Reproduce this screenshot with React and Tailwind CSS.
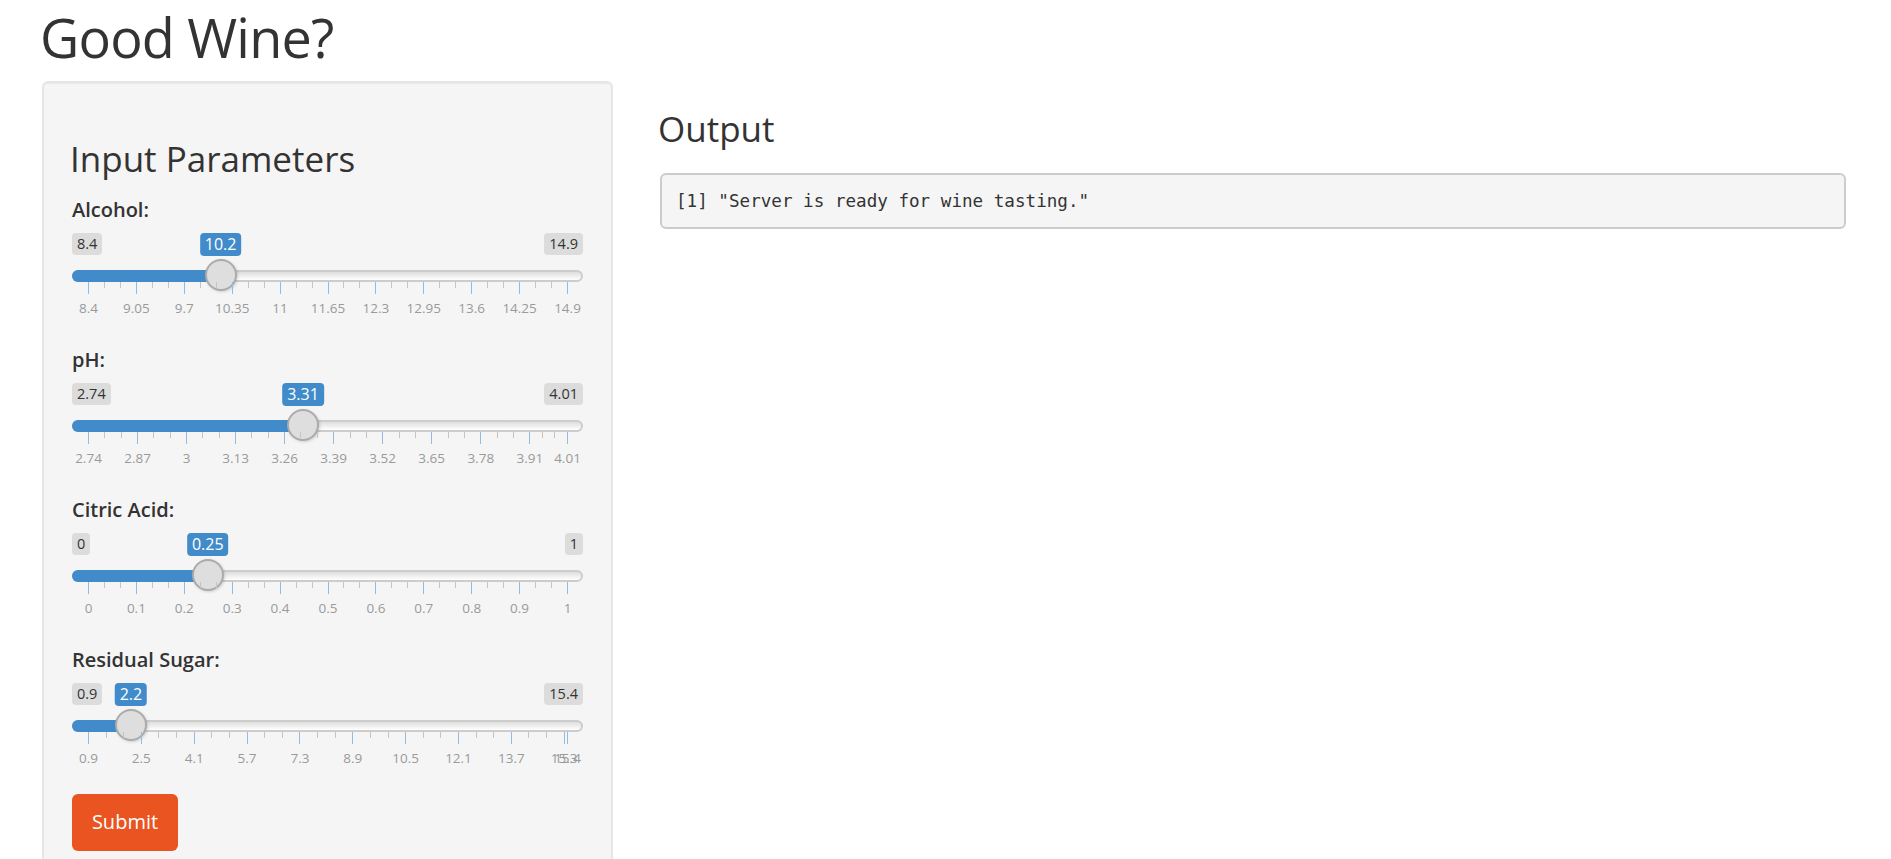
import React from 'react';

const sliders = [
  { id: 'alcohol', label: 'Alcohol:', min: 8.4, max: 14.9, value: 10.2, step: 0.65 },
  { id: 'ph', label: 'pH:', min: 2.74, max: 4.01, value: 3.31, step: 0.13 },
  { id: 'citric', label: 'Citric Acid:', min: 0, max: 1, value: 0.25, step: 0.1 },
  { id: 'sugar', label: 'Residual Sugar:', min: 0.9, max: 15.4, value: 2.2, step: 1.6 },
];

// track fills the well's content width; the handle travels inside it
const TRACK_W = 511;
const HANDLE = 32;
const GRID_W = TRACK_W - HANDLE;

const fmt = (v) => String(parseFloat(v.toFixed(2)));

const RangeSlider = ({ min, max, value, step }) => {
  const pos = (v) => HANDLE / 2 + Math.min(1, (v - min) / (max - min)) * GRID_W;

  const majors = [];
  for (let i = 0; i < 50; i++) {
    const v = min + step * i;
    if (v > max + 1e-9) {
      majors.push(max);
      break;
    }
    majors.push(v);
    if (Math.abs(v - max) < 1e-9) break;
  }

  const smalls = [];
  majors.forEach((v, i) => {
    if (i === 0) return;
    const a = pos(majors[i - 1]);
    const b = pos(v);
    if (b - a > 8) smalls.push(a + (b - a) / 3, a + (2 * (b - a)) / 3);
  });

  const handleX = pos(value);

  return (
    <div className="flex flex-col">
      {/* min / current / max badges */}
      <div className="relative flex h-[25px] items-start justify-between">
        <span className="rounded-[4px] bg-[#dcdcdc] px-[5px] text-[14.5px] leading-[22px] text-[#333]">{fmt(min)}</span>
        <span className="rounded-[4px] bg-[#dcdcdc] px-[5px] text-[14.5px] leading-[22px] text-[#333]">{fmt(max)}</span>
        <span
          className="absolute top-0 -translate-x-1/2 whitespace-nowrap rounded-[4px] bg-[#428bca] px-[5px] text-[16px] leading-[23.5px] text-white"
          style={{ left: handleX }}
        >
          {fmt(value)}
        </span>
      </div>

      {/* track */}
      <div className="relative mt-[12px] h-[12px]">
        <div className="h-full w-full rounded-full border-2 border-[#cccccc] bg-linear-to-b from-[#dedede] to-white" />
        <div className="absolute inset-y-0 left-0 rounded-l-full bg-[#428bca]" style={{ width: handleX }} />
        <div
          className="absolute -top-[11px] h-[32px] w-[32px] rounded-full border-2 border-[#ababab] bg-[#dedede] shadow-[1px_1px_3px_rgba(0,0,0,0.15)]"
          style={{ left: handleX - HANDLE / 2 }}
        />
      </div>

      {/* grid ticks */}
      <div className="relative h-[12px]">
        {smalls.map((x, i) => (
          <span key={'s' + i} className="absolute top-0 h-[6px] w-px bg-[#c4c4c4]" style={{ left: x }} />
        ))}
        {majors.map((v, i) => (
          <span key={'m' + i} className="absolute top-0 h-[12px] w-px bg-[#94bce0]" style={{ left: pos(v) }} />
        ))}
      </div>

      {/* grid labels */}
      <div className="relative mt-[6px] h-[16px]">
        {majors.map((v, i) => (
          <span
            key={'l' + i}
            className="absolute top-0 -translate-x-1/2 whitespace-nowrap text-[13.5px] leading-[16px] text-[#9a9a9a]"
            style={{ left: pos(v) + 0.5 }}
          >
            {fmt(v)}
          </span>
        ))}
      </div>
    </div>
  );
};

export default function App() {
  return (
    <div
      className="min-h-screen bg-white pl-[42px] pr-[45px] text-[#333]"
      style={{ fontFamily: '"Open Sans", "Noto Sans", sans-serif' }}
    >
      <h2 className="h-[81px] -ml-[2px] text-[54px] leading-[74px] font-normal tracking-[-0.8px]">Good Wine?</h2>

      <div className="flex items-start gap-[47px]">
        <div className="w-[571px] shrink-0 rounded-[6px] border-2 border-[#e6e6e6] bg-[#f5f5f5] px-[28px] pt-[57px] pb-[40px] shadow-[inset_0_1px_1px_rgba(0,0,0,0.05)]">
          <h3 className="-ml-[2px] text-[35px] leading-[38.5px] font-normal">Input Parameters</h3>

          <div className="mt-[17px] flex flex-col items-stretch gap-[30px]">
            {sliders.map((s) => (
              <div key={s.id} className="flex flex-col gap-[9px]">
                <label className="text-[20px] leading-[28px] font-semibold">{s.label}</label>
                <RangeSlider min={s.min} max={s.max} value={s.value} step={s.step} />
              </div>
            ))}

            <button className="-mt-[2px] h-[57px] w-[106px] rounded-[6px] bg-[#e95420] text-[20px] text-white">
              Submit
            </button>
          </div>
        </div>

        <div className="flex flex-1 flex-col gap-[24px] pt-[29px]">
          <h3 className="-ml-[2px] text-[35px] leading-[38.5px] font-normal">Output</h3>
          <pre
            className="rounded-[6px] border-2 border-[#cccccc] bg-[#f5f5f5] px-[14px] py-[14px] text-[17.6px] leading-[24px] text-[#333]"
            style={{ fontFamily: '"DejaVu Sans Mono", "Liberation Mono", monospace' }}
          >
            [1] "Server is ready for wine tasting."
          </pre>
        </div>
      </div>
    </div>
  );
}
